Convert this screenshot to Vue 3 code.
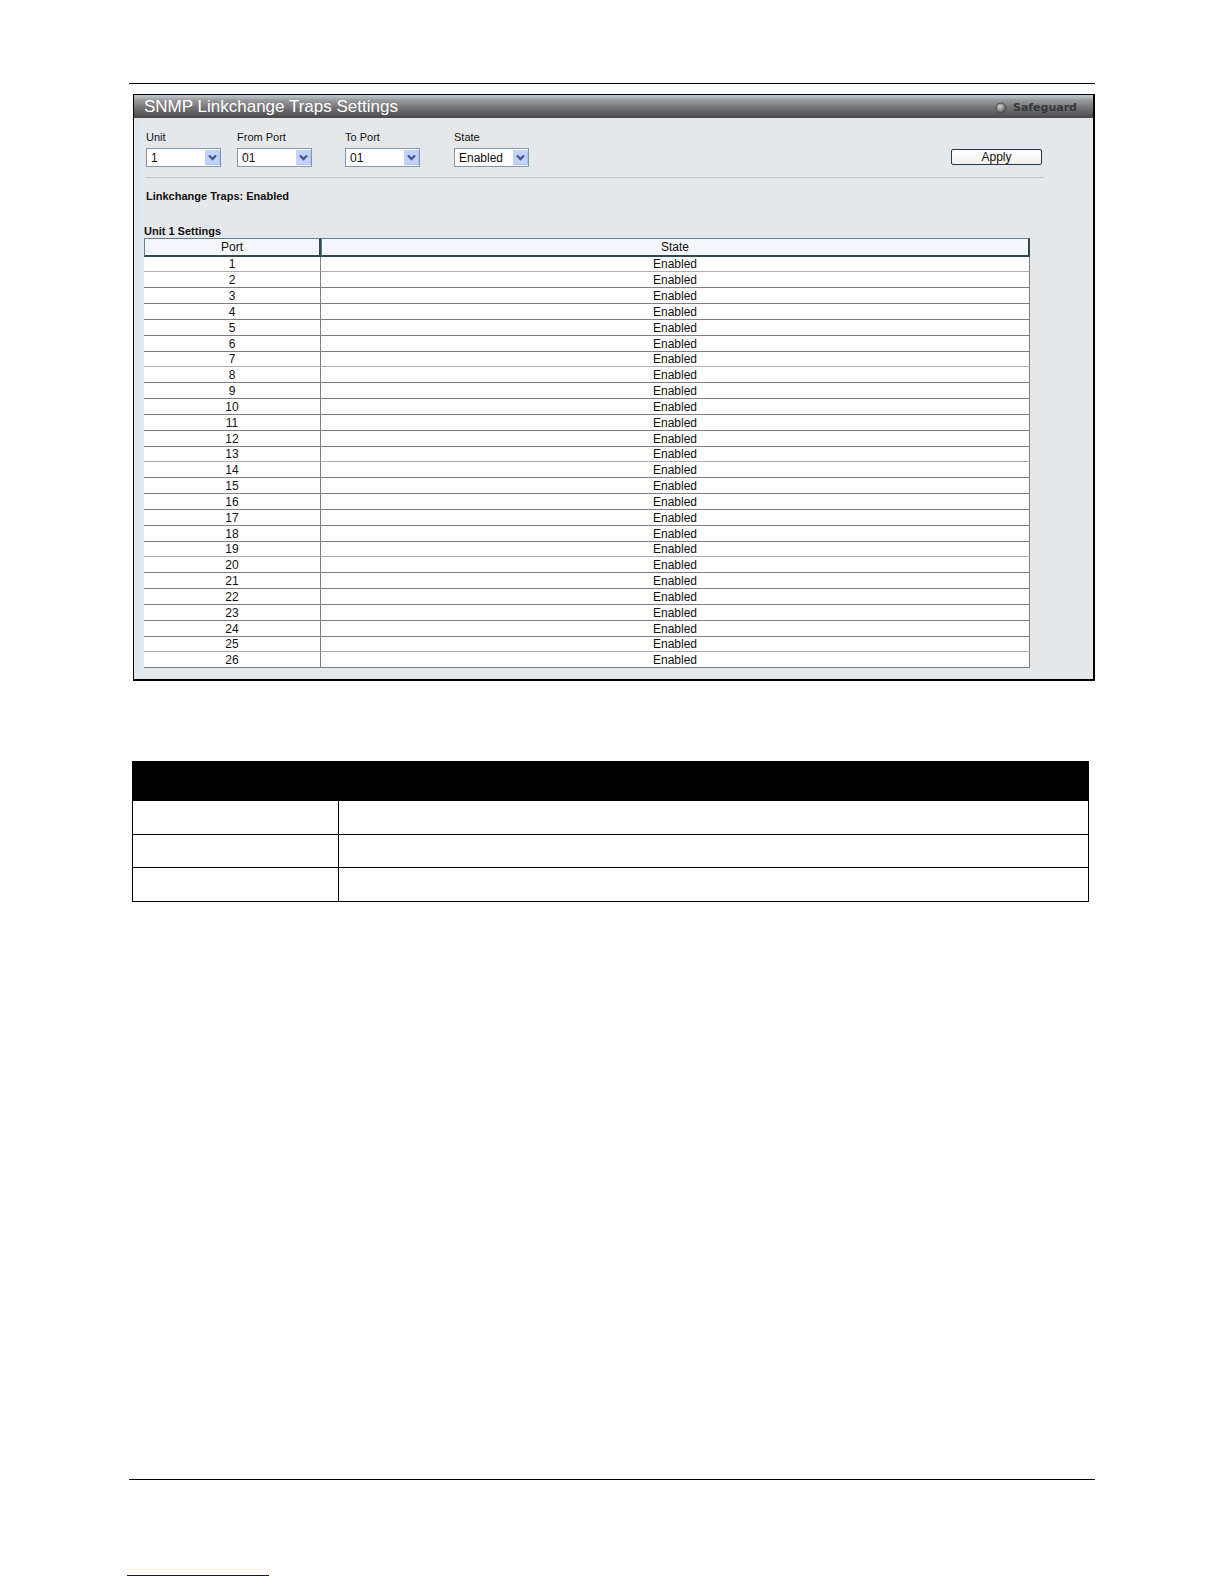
<template>
  <div class="page">
    <main>
      <section class="panel">
        <header class="title_bar">
          <h1>SNMP Linkchange Traps Settings</h1>
          <div class="safeguard">
            <svg width="12" height="12" viewBox="0 0 12 12" aria-hidden="true">
              <defs>
                <radialGradient id="led" cx="0.4" cy="0.35" r="0.65">
                  <stop offset="0" stop-color="#d2d2d2" />
                  <stop offset="0.6" stop-color="#8b8b8d" />
                  <stop offset="1" stop-color="#4a4a4c" />
                </radialGradient>
              </defs>
              <circle cx="6" cy="6" r="5" fill="url(#led)" stroke="#515154" />
            </svg>
            <span>Safeguard</span>
          </div>
        </header>

        <div class="panel_body">
          <form class="settings" @submit.prevent="apply">
            <div v-for="field in fields" :key="field.id" class="field">
              <label :for="field.id">{{ field.label }}</label>
              <div class="select_box">
                <select :id="field.id" v-model="form[field.id]">
                  <option v-for="item in field.options" :key="item" :value="item">{{ item }}</option>
                </select>
                <svg class="arrow" width="15" height="15" viewBox="0 0 15 15" aria-hidden="true">
                  <rect width="15" height="15" rx="1" fill="#c3d2fa" />
                  <path d="M1 14.5H14.5V1" fill="none" stroke="#afc1f1" />
                  <path d="M4 5.5L7.5 9L11 5.5" fill="none" stroke="#435a8c" stroke-width="2.4" />
                </svg>
              </div>
            </div>
            <button type="submit" class="btn_apply">Apply</button>
          </form>

          <p class="status">Linkchange Traps: {{ trapState }}</p>

          <table class="port_table">
            <caption>Unit 1 Settings</caption>
            <colgroup>
              <col class="col_port" />
              <col />
            </colgroup>
            <thead>
              <tr>
                <th scope="col">Port</th>
                <th scope="col">State</th>
              </tr>
            </thead>
            <tbody>
              <tr v-for="row in rows" :key="row.port">
                <td>{{ row.port }}</td>
                <td>{{ row.state }}</td>
              </tr>
            </tbody>
          </table>
        </div>
      </section>

      <table class="param_table">
        <colgroup>
          <col class="col_param" />
          <col />
        </colgroup>
        <thead>
          <tr>
            <th></th>
            <th></th>
          </tr>
        </thead>
        <tbody>
          <tr v-for="n in 3" :key="n">
            <td></td>
            <td></td>
          </tr>
        </tbody>
      </table>
    </main>

    <footer class="footer">
      <a href="#" class="footer_link"></a>
    </footer>
  </div>
</template>

<script setup>
import { reactive, ref } from 'vue';

const ports = Array.from({ length: 26 }, (_, i) => i + 1);
const portOptions = ports.map((n) => String(n).padStart(2, '0'));

const fields = [
  { id: 'unit', label: 'Unit', options: ['1'] },
  { id: 'fromPort', label: 'From Port', options: portOptions },
  { id: 'toPort', label: 'To Port', options: portOptions },
  { id: 'state', label: 'State', options: ['Enabled', 'Disabled'] },
];

const form = reactive({ unit: '1', fromPort: '01', toPort: '01', state: 'Enabled' });
const trapState = ref('Enabled');
const rows = ref(ports.map((port) => ({ port, state: 'Enabled' })));

function apply() {
  rows.value.forEach((row) => {
    if (row.port >= Number(form.fromPort) && row.port <= Number(form.toPort)) {
      row.state = form.state;
    }
  });
}
</script>

<style>
body {
  margin: 0;
  background: #fff;
}
</style>

<style scoped>
.page {
  display: flex;
  flex-direction: column;
  box-sizing: border-box;
  min-height: 100vh;
  padding: 83px 129px 8px;
  font-family: "Liberation Sans", Arial, sans-serif;
  font-size: 12px;
  color: #111;
}
main {
  padding: 10px 0 0 4px;
  border-top: 1px solid #000;
}

/* panel */
.panel {
  border: 1px solid #000;
  border-width: 1px 2px 2px 1px;
  background: linear-gradient(to right, #dde7ed, #e4e8eb 12px);
}
.title_bar {
  display: flex;
  align-items: center;
  justify-content: space-between;
  box-sizing: border-box;
  height: 23px;
  padding: 0 16px 0 10px;
  background: linear-gradient(#a9cbd8 0, #b5babd 2px, #9b9b9d 5px, #77777a 12px, #4c4b4f 22px);
}
.title_bar h1 {
  margin: 0;
  font-size: 17px;
  font-weight: normal;
  line-height: 23px;
  color: #fff;
}
.safeguard {
  display: flex;
  align-items: center;
  gap: 6px;
  padding-top: 2px;
  font-family: "DejaVu Sans", sans-serif;
  font-size: 11px;
  font-weight: bold;
  line-height: 14px;
  color: #35383b;
}
.panel_body {
  padding: 11px 63px 11px 10px;
}

/* form */
.settings {
  display: grid;
  grid-template-columns: 91px 108px 109px 1fr 91px;
  align-items: end;
  margin: 0 -14px 0 2px;
  padding: 0 2px 10px 0;
  border-bottom: 1px solid #c3c9cc;
}
.field label {
  display: block;
  font-size: 11px;
  line-height: 16px;
  margin-bottom: 3px;
}
.select_box {
  position: relative;
  width: 75px;
}
.select_box select {
  display: block;
  appearance: none;
  box-sizing: border-box;
  width: 100%;
  height: 19px;
  margin: 0;
  padding: 0 18px 0 4px;
  border: 1px solid #8199ae;
  border-radius: 0;
  background: #fff;
  font: inherit;
  color: inherit;
}
.arrow {
  position: absolute;
  top: 2px;
  right: 1px;
  pointer-events: none;
}
.btn_apply {
  height: 16px;
  margin-bottom: 2px;
  padding: 0;
  border: 1px solid #26384b;
  border-radius: 2px;
  background: linear-gradient(#fff, #f2f0ef);
  font: inherit;
  line-height: 14px;
  color: inherit;
}
.status {
  margin: 10px 0 20px 2px;
  font-size: 11px;
  font-weight: bold;
  line-height: 16px;
}

/* port list */
.port_table {
  width: 100%;
  table-layout: fixed;
  border-collapse: separate;
  border-spacing: 0;
  text-align: center;
  background: #fff;
}
.port_table caption {
  height: 14px;
  font-size: 11px;
  font-weight: bold;
  line-height: 14px;
  text-align: left;
}
.col_port {
  width: 177px;
}
.port_table th,
.port_table td {
  box-sizing: border-box;
  padding: 1px 0 0;
  line-height: 13px;
}
.port_table th {
  height: 19px;
  border: 1px solid #5f8088;
  border-right: 2px solid #33484e;
  border-bottom: 2px solid #33484e;
  background: #f3f6fa;
  font-weight: normal;
}
.port_table td {
  height: 16px;
  border-right: 1px solid #7e7e7e;
  border-bottom: 1px solid #7e7e7e;
}
.port_table tbody tr:nth-child(6n + 1) td {
  height: 15px;
  border-bottom-color: #adadad;
}

/* parameter list */
.param_table {
  width: calc(100% - 5px);
  margin: 80px 0 0 -1px;
  table-layout: fixed;
  border-collapse: collapse;
}
.col_param {
  width: 206px;
}
.param_table th,
.param_table td {
  box-sizing: border-box;
  padding: 0;
  border: 1px solid #000;
}
.param_table th {
  height: 39px;
  background: #000;
}
.param_table td {
  height: 34px;
}
.param_table tr:nth-child(2) td {
  height: 33px;
}

/* footer */
.footer {
  margin-top: auto;
  padding-top: 95px;
  border-top: 1px solid #000;
}
.footer_link {
  display: block;
  width: 142px;
  margin-left: -2px;
  border-bottom: 1px solid #1a0099;
}
</style>
